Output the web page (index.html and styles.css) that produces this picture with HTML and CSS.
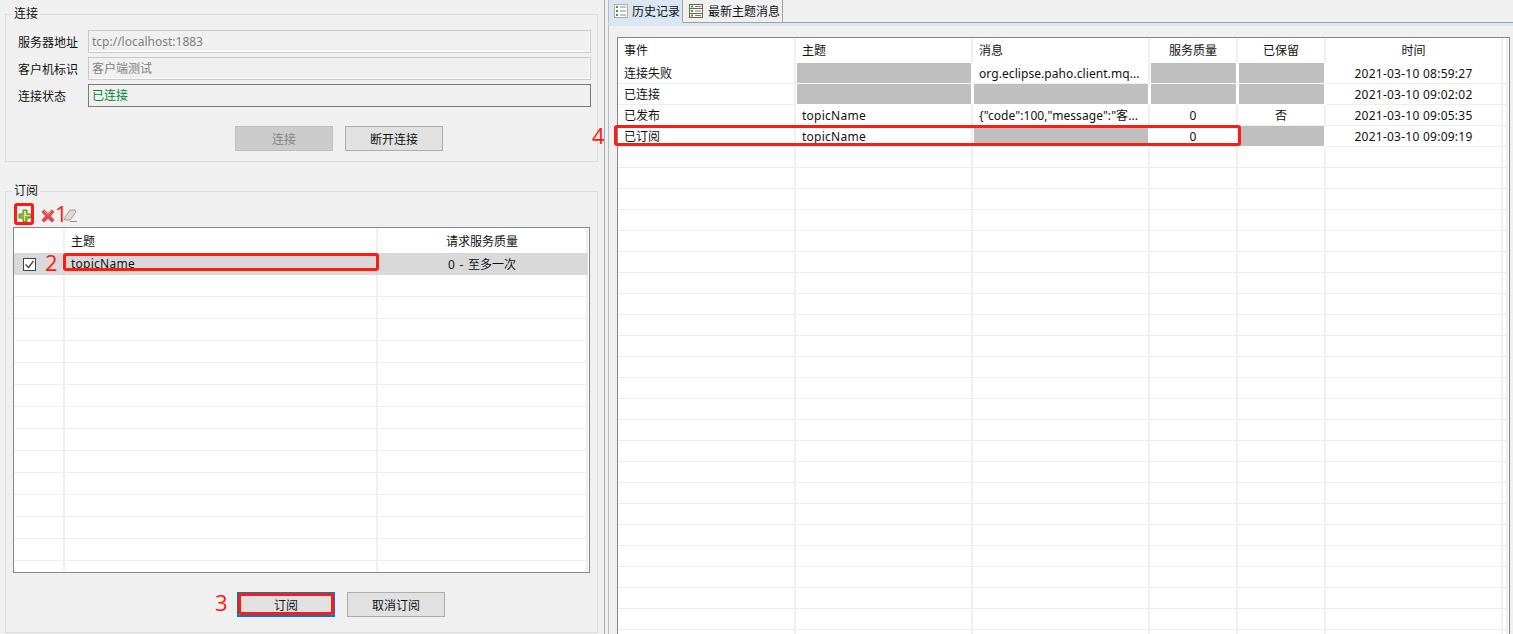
FILE: index.html
```html
<!DOCTYPE html>
<html lang="en">
<head>
  <meta charset="UTF-8" />
  <title>MQTT Client</title>
  <link rel="stylesheet" href="styles.css">
</head>
<body>
  <div class="left-pane">
    <fieldset class="group group-connect">
      <legend>连接</legend>
      <div class="field-row"><span class="field-label">服务器地址</span><div class="field readonly">tcp://localhost:1883</div></div>
      <div class="field-row"><span class="field-label">客户机标识</span><div class="field readonly">客户端测试</div></div>
      <div class="field-row"><span class="field-label">连接状态</span><div class="field status">已连接</div></div>
      <div class="btn-row connect-btns">
        <button class="btn disabled">连接</button>
        <button class="btn">断开连接</button>
      </div>
    </fieldset>

    <fieldset class="group group-sub">
      <legend>订阅</legend>
      <div class="toolbar">
        <svg class="tool-icon" width="14" height="14" viewBox="0 0 14 14">
          <path d="M5 1h4v4h4v4H9v4H5V9H1V5h4z" fill="#8dbb3f" stroke="#5c8a2a" stroke-width="1"/>
          <path d="M6 2h2v4h4v1H7v5H6z" fill="#d9e88a"/>
        </svg>
        <svg class="tool-icon tool-x" width="14" height="14" viewBox="0 0 14 14">
          <path d="M0.800 3L3 0.800 7 4.500 11 0.800 13.200 3 9.500 7 13.200 11 11 13.200 7 9.500 3 13.200 0.800 11 4.500 7z" fill="#e6474d" stroke="#c0565a" stroke-width="0.800" stroke-linejoin="round"/>
          <path d="M3 2l4 3.500 3.500-3" fill="none" stroke="#f29a9a"/>
        </svg>
        <svg class="tool-icon tool-eraser" width="15" height="15" viewBox="0 0 15 15">
          <path d="M1 11L7 2h5l1 2-6 8H2z" fill="#e4dac8" stroke="#a89f8a"/>
          <path d="M7 13.500h7" stroke="#8f8f86"/>
        </svg>
      </div>
      <div class="table-wrap sub-wrap">
        <table class="grid sub-table">
          <colgroup><col class="c-check"><col class="c-topic"><col class="c-qos"></colgroup>
          <thead><tr><th></th><th class="left">主题</th><th>请求服务质量</th></tr></thead>
          <tbody>
            <tr class="selected"><td class="check-cell"><span class="checkbox"><svg width="11" height="11" viewBox="0 0 11 11"><path d="M1.500 5.500l3 3 5-6.500" fill="none" stroke="#444" stroke-width="1.300"/></svg></span></td><td class="left latin">topicName</td><td class="qos">0 - 至多一次</td></tr>
            <tr><td></td><td></td><td></td></tr>
            <tr><td></td><td></td><td></td></tr>
            <tr><td></td><td></td><td></td></tr>
            <tr><td></td><td></td><td></td></tr>
            <tr><td></td><td></td><td></td></tr>
            <tr><td></td><td></td><td></td></tr>
            <tr><td></td><td></td><td></td></tr>
            <tr><td></td><td></td><td></td></tr>
            <tr><td></td><td></td><td></td></tr>
            <tr><td></td><td></td><td></td></tr>
            <tr><td></td><td></td><td></td></tr>
            <tr><td></td><td></td><td></td></tr>
            <tr><td></td><td></td><td></td></tr>
            <tr><td></td><td></td><td></td></tr>
          </tbody>
        </table>
      </div>
      <div class="btn-row sub-btns">
        <button class="btn focused">订阅</button>
        <button class="btn">取消订阅</button>
      </div>
    </fieldset>
  </div>

  <div class="right-pane">
    <div class="tabs">
      <div class="tab active">
        <svg width="14" height="14" viewBox="0 0 14 14">
          <rect x="0.500" y="0.500" width="13" height="13" fill="#fff" stroke="#b8ad7c"/>
          <path d="M2 3h2M2 7h2M2 11h2" stroke="#2f9a5a" stroke-width="2"/>
          <path d="M6 3h6M6 7h6M6 11h6" stroke="#7d8a96"/>
        </svg>
        <span>历史记录</span>
      </div>
      <div class="tab">
        <svg width="14" height="14" viewBox="0 0 14 14">
          <rect x="0.500" y="0.500" width="13" height="13" fill="#fff" stroke="#6b6b45"/>
          <path d="M1 4.500h12M1 9.500h12" stroke="#6b6b45"/>
          <path d="M2 2.500h2M2 7h2" stroke="#2f9a5a" stroke-width="2"/>
          <path d="M2 11.500h2" stroke="#d9502e" stroke-width="2"/>
          <path d="M6 2.500h6M6 7h6M6 11.500h6" stroke="#777"/>
        </svg>
        <span>最新主题消息</span>
      </div>
    </div>
    <div class="tab-body">
      <div class="table-wrap history-wrap">
        <table class="grid history-table">
          <colgroup><col class="h-event"><col class="h-topic"><col class="h-msg"><col class="h-qos"><col class="h-ret"><col class="h-time"><col></colgroup>
          <thead><tr><th class="left">事件</th><th class="left">主题</th><th class="left">消息</th><th>服务质量</th><th>已保留</th><th>时间</th><th></th></tr></thead>
          <tbody>
            <tr><td class="left">连接失败</td><td class="na"></td><td class="left msg">org.eclipse.paho.client.mq...</td><td class="na"></td><td class="na"></td><td class="latin">2021-03-10 08:59:27</td><td></td></tr>
            <tr><td class="left">已连接</td><td class="na"></td><td class="na"></td><td class="na"></td><td class="na"></td><td class="latin">2021-03-10 09:02:02</td><td></td></tr>
            <tr><td class="left">已发布</td><td class="left latin">topicName</td><td class="left msg">{"code":100,"message":"客...</td><td>0</td><td>否</td><td class="latin">2021-03-10 09:05:35</td><td></td></tr>
            <tr><td class="left">已订阅</td><td class="left latin">topicName</td><td class="na"></td><td>0</td><td class="na"></td><td class="latin">2021-03-10 09:09:19</td><td></td></tr>
            <tr><td></td><td></td><td></td><td></td><td></td><td></td><td></td></tr>
            <tr><td></td><td></td><td></td><td></td><td></td><td></td><td></td></tr>
            <tr><td></td><td></td><td></td><td></td><td></td><td></td><td></td></tr>
            <tr><td></td><td></td><td></td><td></td><td></td><td></td><td></td></tr>
            <tr><td></td><td></td><td></td><td></td><td></td><td></td><td></td></tr>
            <tr><td></td><td></td><td></td><td></td><td></td><td></td><td></td></tr>
            <tr><td></td><td></td><td></td><td></td><td></td><td></td><td></td></tr>
            <tr><td></td><td></td><td></td><td></td><td></td><td></td><td></td></tr>
            <tr><td></td><td></td><td></td><td></td><td></td><td></td><td></td></tr>
            <tr><td></td><td></td><td></td><td></td><td></td><td></td><td></td></tr>
            <tr><td></td><td></td><td></td><td></td><td></td><td></td><td></td></tr>
            <tr><td></td><td></td><td></td><td></td><td></td><td></td><td></td></tr>
            <tr><td></td><td></td><td></td><td></td><td></td><td></td><td></td></tr>
            <tr><td></td><td></td><td></td><td></td><td></td><td></td><td></td></tr>
            <tr><td></td><td></td><td></td><td></td><td></td><td></td><td></td></tr>
            <tr><td></td><td></td><td></td><td></td><td></td><td></td><td></td></tr>
            <tr><td></td><td></td><td></td><td></td><td></td><td></td><td></td></tr>
            <tr><td></td><td></td><td></td><td></td><td></td><td></td><td></td></tr>
            <tr><td></td><td></td><td></td><td></td><td></td><td></td><td></td></tr>
            <tr><td></td><td></td><td></td><td></td><td></td><td></td><td></td></tr>
            <tr><td></td><td></td><td></td><td></td><td></td><td></td><td></td></tr>
            <tr><td></td><td></td><td></td><td></td><td></td><td></td><td></td></tr>
            <tr><td></td><td></td><td></td><td></td><td></td><td></td><td></td></tr>
            <tr><td></td><td></td><td></td><td></td><td></td><td></td><td></td></tr>
          </tbody>
        </table>
      </div>
    </div>
  </div>

  <!-- red annotations drawn over the screenshot -->
  <div class="mark mark-add"></div>
  <div class="mark mark-topic"></div>
  <div class="mark mark-btn"></div>
  <div class="mark mark-row"></div>
  <span class="num num-1">1</span>
  <span class="num num-2">2</span>
  <span class="num num-3">3</span>
  <span class="num num-4">4</span>
</body>
</html>
```

FILE: styles.css
```css
* { box-sizing: border-box; }

html, body {
  margin: 0;
  height: 634px;
  overflow: hidden;
}

body {
  position: relative;
  display: flex;
  background: #f0f0f0;
  color: #111;
  font-family: "Noto Sans", "Noto Sans CJK SC", sans-serif;
  font-size: 12px;
}

/* left side */
.left-pane {
  width: 605px;
  flex: none;
  padding: 5px 0 0 5px;
  border-right: 1px solid #a9a9a9;
}

.group {
  width: 593px;
  margin: 0;
  padding: 0;
  min-width: 0;
  border: 1px solid #dcdcdc;
}

.group legend {
  padding: 0 2px;
  line-height: 18px;
}

.group-connect {
  height: 157px;
  padding: 7px 0 0 12px;
}

.group-connect legend { margin-left: -6px; }

.group-sub {
  height: 451px;
  margin-top: 20px;
  padding: 3px 0 0 7px;
}

.group-sub legend { margin-left: -1px; }

.field-row {
  display: flex;
  align-items: center;
  height: 23px;
  margin-bottom: 4px;
}

.field-label {
  width: 70px;
  flex: none;
}

.field {
  width: 503px;
  height: 23px;
  padding: 0 3px;
  line-height: 22px;
  border: 1px solid #7a7a7a;
}

.field.readonly {
  border-color: #c9c9c9;
  box-shadow: inset -1px -1px 0 #fff;
  color: #7f7f7f;
}

.field.status {
  color: #00882a;
}

.btn-row {
  display: flex;
  gap: 12px;
}

.connect-btns {
  margin: 19px 0 0 217px;
}

.sub-btns {
  margin: 19px 0 0 224px;
}

.btn {
  width: 98px;
  height: 25px;
  padding: 0;
  font: inherit;
  color: #111;
  background: #e1e1e1;
  border: 1px solid #adadad;
}

.btn.disabled {
  background: #cccccc;
  border-color: #bfbfbf;
  color: #838383;
}

.btn.focused {
  border: 2px solid #0078d7;
}

.toolbar {
  display: flex;
  align-items: center;
  height: 24px;
  padding: 1px 0 0 5px;
}

.tool-x { margin-left: 9px; }
.tool-eraser { margin-left: 8px; }

/* tables */
.table-wrap {
  overflow: hidden;
  background: #fff;
  border: 1px solid #85878c;
}

.sub-wrap {
  width: 577px;
  height: 346px;
}

.grid {
  border-collapse: separate;
  border-spacing: 0;
  table-layout: fixed;
}

.sub-table { width: 574px; }

.c-check { width: 51px; }
.c-topic { width: 313px; }

.grid th {
  height: 25px;
  padding: 0;
  font-weight: 400;
  border-right: 2px solid #f0f0f0;
}

.sub-table th { padding-top: 1px; }
.history-table th { padding-bottom: 1px; }

.grid td {
  padding: 0;
  text-align: center;
  white-space: nowrap;
  overflow: hidden;
  border-right: 2px solid #eef0f6;
  border-bottom: 1px solid #eeeeee;
}

.sub-table td { height: 22px; }
.history-table td { height: 21px; }

.grid .left {
  padding-left: 6px;
  text-align: left;
}

.latin { letter-spacing: 0.25px; }
.msg { letter-spacing: 0.07px; }
.qos { word-spacing: 1.5px; }

.selected td {
  background: #d9d9d9;
  border-right-color: #d9d9d9;
  border-bottom-color: #d9d9d9;
}

.grid .check-cell {
  padding-left: 9px;
  text-align: left;
}

.checkbox {
  display: inline-flex;
  align-items: center;
  justify-content: center;
  width: 13px;
  height: 13px;
  vertical-align: middle;
  background: #fff;
  border: 1px solid #444;
}

/* right side */
.right-pane {
  flex: 1;
  min-width: 0;
  padding-left: 3px;
  display: flex;
  flex-direction: column;
}

.tabs {
  display: flex;
  height: 23px;
  border-left: 1px solid #b5bcc4;
}

.tab {
  display: flex;
  align-items: center;
  gap: 4px;
  height: 23px;
  padding: 0 1px 0 5px;
  white-space: nowrap;
  background: #f0f0f0;
  border-right: 1px solid #a0a0a0;
  border-bottom: 1px solid #a0a0a0;
}

.tab.active {
  width: 74px;
  background: #dae6f3;
  border-bottom-color: #dae6f3;
}

.tab + .tab {
  width: 100px;
  padding-left: 6px;
  gap: 5px;
}

.tabs::after {
  content: "";
  flex: 1;
  border-bottom: 1px solid #a0a0a0;
}

.tab-body {
  flex: 1;
  padding: 11px 3px 0 8px;
  overflow: hidden;
  background: #f0f0f0;
  border-left: 1px solid #b5bcc4;
  border-top: 3px solid #dae6f3;
}

.history-wrap {
  height: 600px;
}

.history-table { width: 890px; }

.h-event { width: 178px; }
.h-topic { width: 177px; }
.h-msg { width: 177px; }
.h-qos { width: 88px; }
.h-ret { width: 88px; }
.h-time { width: 177px; }

.grid td.na {
  background: #bebfbe;
  border-left: 1px solid #fff;
  border-right: 2px solid #fff;
  border-bottom-color: #fff;
}

/* annotations */
.mark {
  position: absolute;
  border: 3px solid #ff1a12;
  border-radius: 3px;
}

.mark-add { left: 14px; top: 203px; width: 20px; height: 22px; }
.mark-topic { left: 63px; top: 253px; width: 316px; height: 18px; }
.mark-btn { left: 238px; top: 593px; width: 96px; height: 22px; }
.mark-row { left: 614px; top: 125px; width: 627px; height: 21px; }

.num {
  position: absolute;
  font-family: "Open Sans", sans-serif;
  font-size: 22px;
  line-height: 24px;
  color: #ff1a12;
}

.num-1 { left: 55px; top: 201px; }
.num-2 { left: 45px; top: 250px; }
.num-3 { left: 215px; top: 590px; }
.num-4 { left: 592px; top: 123px; }
```
